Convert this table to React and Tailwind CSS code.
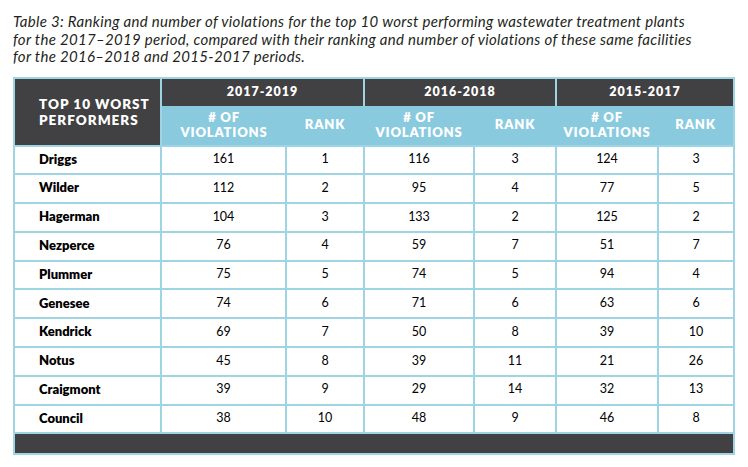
import React from "react";

const rows = [
  ["Driggs", "161", "1", "116", "3", "124", "3"],
  ["Wilder", "112", "2", "95", "4", "77", "5"],
  ["Hagerman", "104", "3", "133", "2", "125", "2"],
  ["Nezperce", "76", "4", "59", "7", "51", "7"],
  ["Plummer", "75", "5", "74", "5", "94", "4"],
  ["Genesee", "74", "6", "71", "6", "63", "6"],
  ["Kendrick", "69", "7", "50", "8", "39", "10"],
  ["Notus", "45", "8", "39", "11", "21", "26"],
  ["Craigmont", "39", "9", "29", "14", "32", "13"],
  ["Council", "38", "10", "48", "9", "46", "8"],
];

const periods = ["2017-2019", "2016-2018", "2015-2017"];

export default function App() {
  return (
    <div className="w-[748px] h-[467px] bg-white pt-[13px] pl-[13px] font-['Lato','Open_Sans',sans-serif] text-[#231f20]">
      <p className="italic text-[15px] leading-[17.5px] tracking-[0.3px] whitespace-nowrap">
        Table 3: Ranking and number of violations for the top 10 worst performing wastewater treatment plants
        <br />
        for the 2017–2019 period, compared with their ranking and number of violations of these same facilities
        <br />
        for the 2016–2018 and 2015-2017 periods.
      </p>

      <table className="mt-[11px] table-fixed border-collapse border-2 border-[#9fd4e5] w-[720px]">
        <colgroup>
          <col className="w-[147px]" />
          <col className="w-[125px]" />
          <col className="w-[78px]" />
          <col className="w-[110px]" />
          <col className="w-[82px]" />
          <col className="w-[102px]" />
          <col className="w-[76px]" />
        </colgroup>
        <thead>
          <tr className="h-[28px] bg-[#414042] text-white">
            <th
              rowSpan={2}
              className="bg-[#414042] text-left align-middle pl-[24px] text-[13.5px] leading-[16px] font-extrabold tracking-[1px] border-2 border-[#9fd4e5]"
            >
              TOP 10 WORST
              <br />
              PERFORMERS
            </th>
            {periods.map((p) => (
              <th
                key={p}
                colSpan={2}
                className="text-center text-[12.5px] font-extrabold tracking-[1px] border-x-2 border-[#9fd4e5]"
              >
                {p}
              </th>
            ))}
          </tr>
          <tr className="h-[40px] bg-[#89cadf] text-white">
            {periods.map((p) => (
              <React.Fragment key={p}>
                <th className="text-center text-[13px] leading-[15px] font-extrabold tracking-[0.8px]">
                  # OF
                  <br />
                  VIOLATIONS
                </th>
                <th className="text-center text-[13px] font-extrabold tracking-[0.8px]">RANK</th>
              </React.Fragment>
            ))}
          </tr>
        </thead>
        <tbody>
          {rows.map((r) => (
            <tr key={r[0]} className="h-[28.8px]">
              <td className="border-2 border-[#9fd4e5] pl-[24px] text-[13px] font-extrabold text-black pb-[1px]">
                {r[0]}
              </td>
              {r.slice(1).map((v, i) => (
                <td
                  key={i}
                  className="border-2 border-[#9fd4e5] text-center text-[12.5px] text-black pb-[1px]"
                >
                  {v}
                </td>
              ))}
            </tr>
          ))}
          <tr className="h-[21px] bg-[#414042]">
            <td colSpan={7}></td>
          </tr>
        </tbody>
      </table>
    </div>
  );
}
